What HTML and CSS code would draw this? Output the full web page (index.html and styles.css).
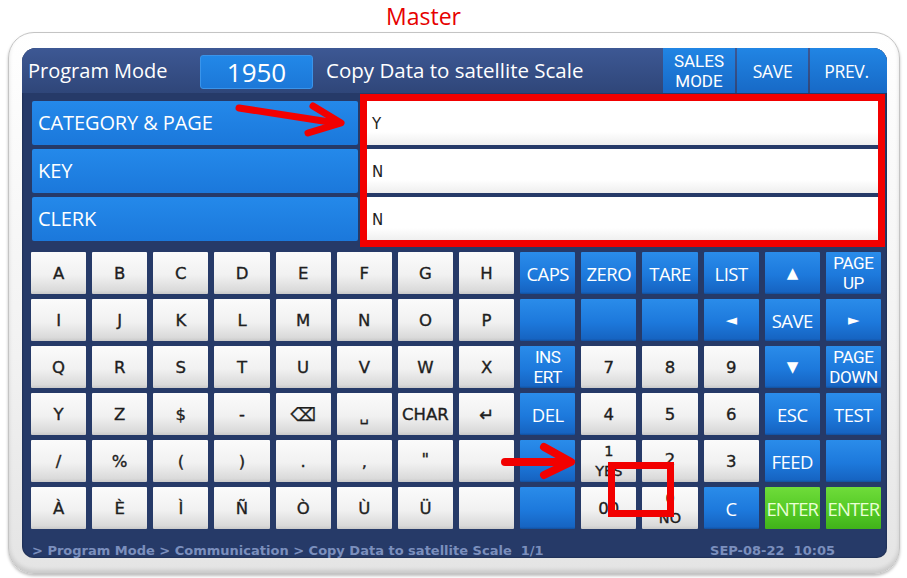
FILE: index.html
```html
<!DOCTYPE html>
<html>
<head>
<meta charset="utf-8">
<link rel="stylesheet" href="styles.css">
</head>
<body>
<div class="page">
  <div class="title">Master</div>
  <div class="bezel">
    <div class="screen">
      <div class="header">
        <div class="mode">Program Mode</div>
        <div class="code">1950</div>
        <div class="htitle">Copy Data to satellite Scale</div>
        <div class="hbtns">
          <div class="hbtn sales">SALES<br>MODE</div>
          <div class="hbtn save">SAVE</div>
          <div class="hbtn prev">PREV.</div>
        </div>
      </div>
      <div class="fields">
        <div class="frow"><div class="flabel">CATEGORY &amp; PAGE</div><div class="fval">Y</div></div>
        <div class="frow"><div class="flabel">KEY</div><div class="fval">N</div></div>
        <div class="frow"><div class="flabel">CLERK</div><div class="fval">N</div></div>
      </div>
      <div class="keys">
        <div class="k w">A</div><div class="k w">B</div><div class="k w">C</div><div class="k w">D</div><div class="k w">E</div><div class="k w">F</div><div class="k w">G</div><div class="k w">H</div>
        <div class="k b">CAPS</div><div class="k b">ZERO</div><div class="k b">TARE</div><div class="k b">LIST</div><div class="k b sym">▲</div><div class="k b two">PAGE<br>UP</div>

        <div class="k w">I</div><div class="k w">J</div><div class="k w">K</div><div class="k w">L</div><div class="k w">M</div><div class="k w">N</div><div class="k w">O</div><div class="k w">P</div>
        <div class="k b"></div><div class="k b"></div><div class="k b"></div><div class="k b sym">◄</div><div class="k b">SAVE</div><div class="k b sym">►</div>

        <div class="k w">Q</div><div class="k w">R</div><div class="k w">S</div><div class="k w">T</div><div class="k w">U</div><div class="k w">V</div><div class="k w">W</div><div class="k w">X</div>
        <div class="k b two">INS<br>ERT</div><div class="k w">7</div><div class="k w">8</div><div class="k w">9</div><div class="k b sym">▼</div><div class="k b two">PAGE<br>DOWN</div>

        <div class="k w">Y</div><div class="k w">Z</div><div class="k w">$</div><div class="k w">-</div><div class="k w glyph">⌫</div><div class="k w low">␣</div><div class="k w">CHAR</div><div class="k w glyph">↵</div>
        <div class="k b">DEL</div><div class="k w">4</div><div class="k w">5</div><div class="k w">6</div><div class="k b">ESC</div><div class="k b">TEST</div>

        <div class="k w">/</div><div class="k w">%</div><div class="k w">(</div><div class="k w">)</div><div class="k w">.</div><div class="k w">,</div><div class="k w hi">"</div><div class="k w"></div>
        <div class="k b"></div><div class="k w two">1<br>YES</div><div class="k w hi">2</div><div class="k w">3</div><div class="k b">FEED</div><div class="k b"></div>

        <div class="k w">À</div><div class="k w">È</div><div class="k w">Ì</div><div class="k w">Ñ</div><div class="k w">Ò</div><div class="k w">Ù</div><div class="k w">Ü</div><div class="k w"></div>
        <div class="k b"></div><div class="k w">00</div><div class="k w two">0<br>NO</div><div class="k b">C</div><div class="k g">ENTER</div><div class="k g">ENTER</div>
      </div>
      <div class="status">
        <span class="path">&gt; Program Mode &gt; Communication &gt; Copy Data to satellite Scale&nbsp;&nbsp;1/1</span>
        <span class="clock">SEP-08-22&nbsp;&nbsp;10:05</span>
      </div>
    </div>
  </div>

  <div class="redbox"></div>
  <svg class="marks" width="907" height="578" viewBox="0 0 907 578">
    <g fill="none" stroke="#f20000" stroke-linecap="round" stroke-linejoin="round">
      <line x1="239" y1="108" x2="336" y2="123" stroke-width="7"/>
      <polyline points="313,106 341,123 308,133" stroke-width="7"/>
      <line x1="505" y1="462" x2="568" y2="462" stroke-width="8"/>
      <polyline points="544,447 571,462 544,475" stroke-width="8"/>
      <rect x="611.5" y="465.5" width="59" height="48" stroke-width="7" stroke-linecap="butt" stroke-linejoin="miter"/>
    </g>
  </svg>
</div>
</body>
</html>
```

FILE: styles.css
```css
* { box-sizing: border-box; }

body {
  margin: 0;
  background: #ffffff;
  font-family: "Open Sans", "Noto Sans", "DejaVu Sans", sans-serif;
}

.page {
  position: relative;
  width: 907px;
  height: 578px;
  overflow: hidden;
}

.title {
  height: 32px;
  padding-left: 386px;
  color: #e60000;
  font-size: 23px;
  line-height: 30px;
  padding-top: 1px;
}

.bezel {
  margin-left: 8px;
  width: 892px;
  height: 542px;
  padding: 15px 12px 15px 13px;
  border: 1px solid #c4c4c4;
  border-radius: 26px;
  background: linear-gradient(#ffffff, #f2f2f2 60%, #e4e4e4);
  box-shadow: 0 2px 3px rgba(0,0,0,0.25), inset 0 -3px 4px rgba(0,0,0,0.12);
}

.screen {
  width: 865px;
  height: 510px;
  background: #263a68;
  border-radius: 14px 14px 10px 12px;
  overflow: hidden;
  display: flex;
  flex-direction: column;
  box-shadow: inset 0 0 2px rgba(0,0,0,0.5);
}

/* header */
.header {
  height: 45px;
  flex: none;
  display: flex;
  align-items: stretch;
  background: linear-gradient(#3d5894, #2f4679);
  color: #ffffff;
}

.mode {
  width: 178px;
  padding-left: 6px;
  font-size: 20px;
  line-height: 45px;
}

.code {
  margin-top: 7px;
  width: 113px;
  height: 34px;
  background: linear-gradient(#2288e8, #1c78d8);
  border: 1px solid #3a94ea;
  border-radius: 3px;
  text-align: center;
  font-size: 26px;
  line-height: 32px;
}

.htitle {
  margin-left: 13px;
  font-size: 20.5px;
  line-height: 45px;
  flex: 1;
}

.hbtns {
  display: flex;
  gap: 2px;
}

.hbtn {
  display: flex;
  align-items: center;
  justify-content: center;
  text-align: center;
  background: linear-gradient(#2185e4, #1769c6);
  font-size: 17.5px;
  line-height: 24px;
  letter-spacing: -0.3px;
}
.hbtn.sales {
  width: 72px;
  font-family: Roboto, "Open Sans", sans-serif;
  font-size: 17px;
  line-height: 20px;
  letter-spacing: 0;
}
.hbtn.save { width: 71px; }
.hbtn.prev { width: 77px; padding-right: 4px; }

/* fields */
.fields {
  flex: none;
  padding-top: 8px;
  display: flex;
  flex-direction: column;
  gap: 4px;
}

.frow {
  height: 44px;
  display: flex;
  gap: 4px;
}

.flabel {
  margin-left: 10px;
  width: 326px;
  background: linear-gradient(#2489ea, #1b78db);
  border-radius: 2px;
  color: #ffffff;
  font-size: 20px;
  line-height: 44px;
  padding-left: 6px;
  letter-spacing: -0.1px;
}

.fval {
  flex: 1;
  margin-right: 5px;
  background: linear-gradient(#ffffff 70%, #eeeeee);
  color: #222222;
  font-family: "DejaVu Sans", sans-serif;
  font-size: 15px;
  line-height: 46px;
  padding-left: 10px;
}

/* keyboard */
.keys {
  flex: none;
  margin-top: 11px;
  padding: 0 6px 0 9px;
  display: grid;
  grid-template-columns: repeat(14, 1fr);
  grid-template-rows: repeat(6, 42px);
  column-gap: 6px;
  row-gap: 5px;
}

.k {
  display: flex;
  align-items: center;
  justify-content: center;
  text-align: center;
  border-radius: 1px;
  overflow: hidden;
  white-space: nowrap;
}

.k.w {
  background: linear-gradient(#fbfbfb, #f1f1f1 55%, #dadada 92%, #c9c9c9);
  color: #1e1e1e;
  font-family: "DejaVu Sans", sans-serif;
  font-size: 16.5px;
  -webkit-text-stroke: 0.35px #1e1e1e;
}

.k.b {
  background: linear-gradient(#2a8cea, #1d79dc 55%, #1664c2 95%, #12509e);
  color: #ffffff;
  font-size: 18.5px;
  letter-spacing: -0.5px;
}

.k.g {
  background: linear-gradient(#6fdc3a, #52c824 60%, #40b21a);
  color: #eaffd6;
  font-size: 18.5px;
  letter-spacing: -0.9px;
}

.k.two {
  font-family: Roboto, "Open Sans", sans-serif;
  line-height: 20px;
  font-size: 17px;
  letter-spacing: -0.4px;
}
.k.w.two {
  font-family: "DejaVu Sans", sans-serif;
  font-size: 14.5px;
  line-height: 20px;
  letter-spacing: 0;
}
.k.sym { font-family: "DejaVu Sans", sans-serif; font-size: 15px; }
.k.glyph { font-size: 18px; }
.k.low { align-items: flex-end; padding-bottom: 11px; font-size: 14px; }
.k.hi { align-items: flex-start; padding-top: 10px; }

/* status bar */
.status {
  flex: 1;
  display: flex;
  justify-content: space-between;
  padding: 14px 52px 0 10px;
  color: #7b8fbd;
  font-family: "DejaVu Sans", sans-serif;
  font-weight: bold;
  font-size: 13px;
  line-height: 15px;
  overflow: hidden;
}

/* annotations */
.redbox {
  position: absolute;
  left: 360px;
  top: 94px;
  width: 525px;
  height: 153px;
  border: 7px solid #f20000;
}

.marks {
  position: absolute;
  left: 0;
  top: 0;
  pointer-events: none;
}
```
